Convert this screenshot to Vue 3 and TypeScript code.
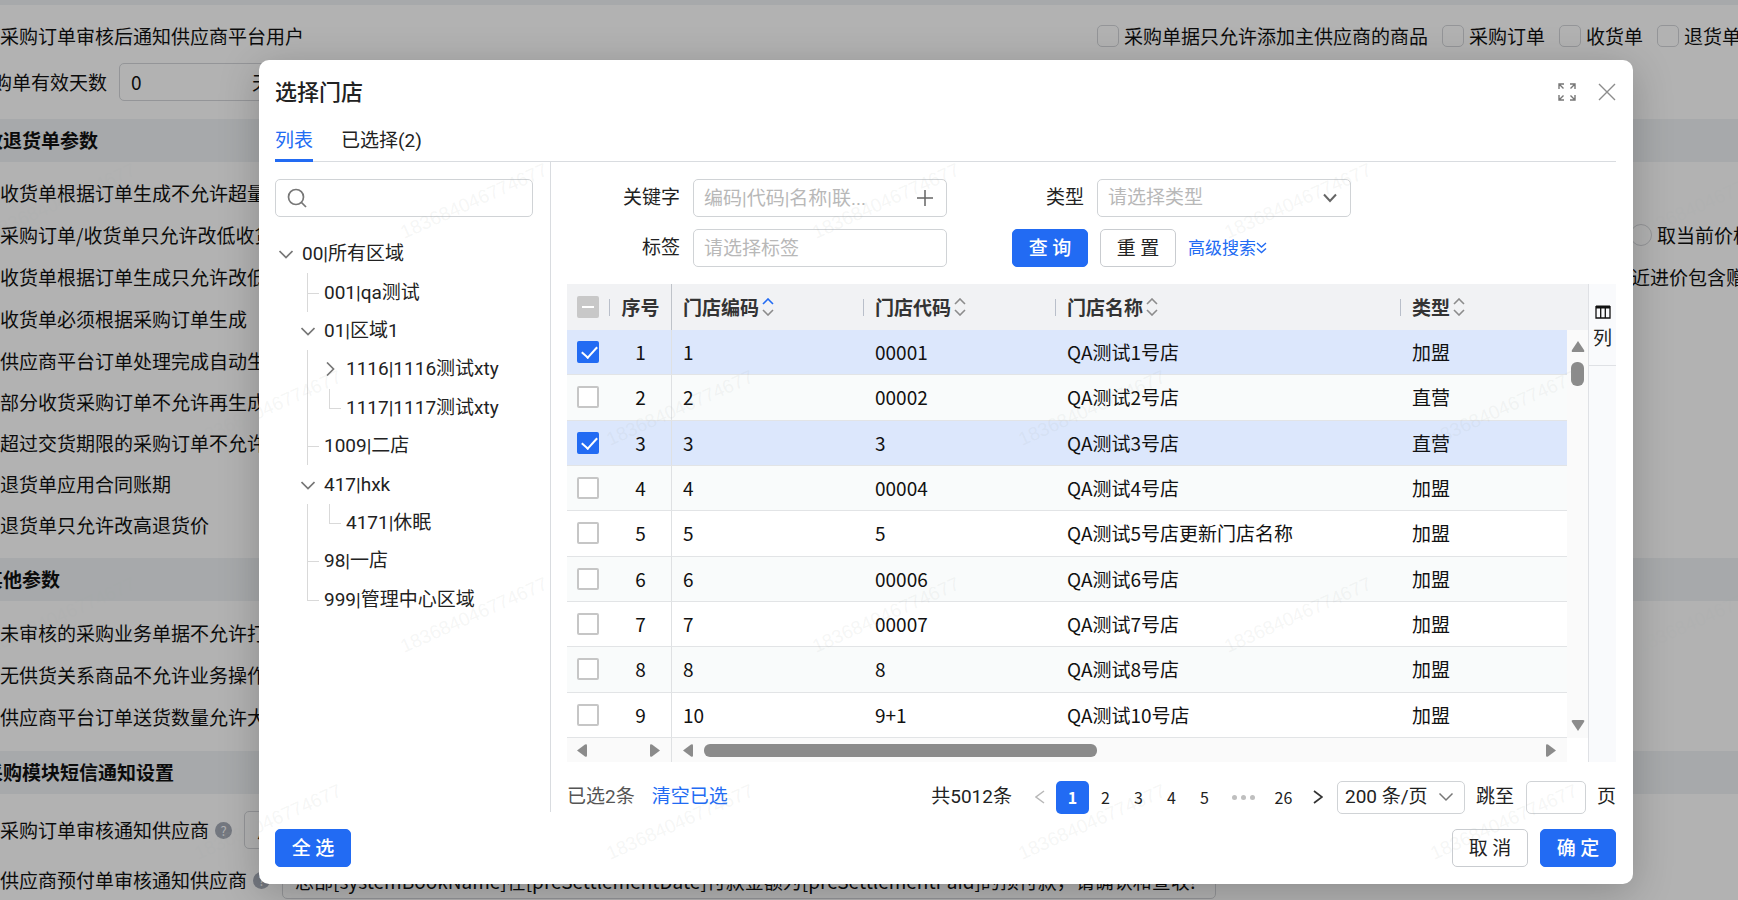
<script setup lang="ts">
import { ref } from 'vue'

interface TreeRow {
  label: string
  level: number
  caret?: 'open' | 'closed'
  guides: string[]
}
interface Store {
  no: number
  code: string
  alias: string
  name: string
  type: string
  checked: boolean
}

const tree: TreeRow[] = [
  { label: '00|所有区域', level: 0, caret: 'open', guides: [] },
  { label: '001|qa测试', level: 1, guides: ['tee'] },
  { label: '01|区域1', level: 1, caret: 'open', guides: [] },
  { label: '1116|1116测试xty', level: 2, caret: 'closed', guides: ['line'] },
  { label: '1117|1117测试xty', level: 2, guides: ['line', 'end'] },
  { label: '1009|二店', level: 1, guides: ['tee'] },
  { label: '417|hxk', level: 1, caret: 'open', guides: [] },
  { label: '4171|休眠', level: 2, guides: ['line', 'end'] },
  { label: '98|一店', level: 1, guides: ['tee'] },
  { label: '999|管理中心区域', level: 1, guides: ['end'] },
]

const stores = ref<Store[]>([
  { no: 1, code: '1', alias: '00001', name: 'QA测试1号店', type: '加盟', checked: true },
  { no: 2, code: '2', alias: '00002', name: 'QA测试2号店', type: '直营', checked: false },
  { no: 3, code: '3', alias: '3', name: 'QA测试3号店', type: '直营', checked: true },
  { no: 4, code: '4', alias: '00004', name: 'QA测试4号店', type: '加盟', checked: false },
  { no: 5, code: '5', alias: '5', name: 'QA测试5号店更新门店名称', type: '加盟', checked: false },
  { no: 6, code: '6', alias: '00006', name: 'QA测试6号店', type: '加盟', checked: false },
  { no: 7, code: '7', alias: '00007', name: 'QA测试7号店', type: '加盟', checked: false },
  { no: 8, code: '8', alias: '8', name: 'QA测试8号店', type: '加盟', checked: false },
  { no: 9, code: '10', alias: '9+1', name: 'QA测试10号店', type: '加盟', checked: false },
])

const columns = [
  { title: '门店编码', sorted: true },
  { title: '门店代码', sorted: false },
  { title: '门店名称', sorted: false },
  { title: '类型', sorted: false },
]

const topOptions = ['采购单据只允许添加主供应商的商品', '采购订单', '收货单', '退货单']
const receiptRules = [
  { text: '收货单根据订单生成不允许超量' },
  { text: '采购订单/收货单只允许改低收货价', radio: '取当前价格' },
  { text: '收货单根据订单生成只允许改低', note: '最近进价包含赠品' },
  { text: '收货单必须根据采购订单生成' },
]
const orderRules = [
  '供应商平台订单处理完成自动生成',
  '部分收货采购订单不允许再生成',
  '超过交货期限的采购订单不允许收货',
  '退货单应用合同账期',
  '退货单只允许改高退货价',
]
const otherRules = ['未审核的采购业务单据不允许打印', '无供货关系商品不允许业务操作', '供应商平台订单送货数量允许大于']
const noticeText = ref('总部[systemBookName]在[preSettlementDate]付款金额为[preSettlementPaid]的预付款，请确认和查收!')
const auditText = ref('总部')
const days = ref('0')
const pages = ['1', '2', '3', '4', '5']

const marks: { x: number; y: number }[] = []
for (let row = 0; row < 4; row++) {
  for (let col = 0; col < 5; col++) {
    marks.push({ x: (row % 2 ? -214 : -8) + col * 412, y: 239 + row * 207 })
  }
}
</script>

<template>
  <div class="screen">
    <main class="page">
      <div class="strip"></div>
      <div class="topline">
        <span>采购订单审核后通知供应商平台用户</span>
        <div class="options">
          <label v-for="o in topOptions" :key="o"><input type="checkbox" class="soft-box" />{{ o }}</label>
        </div>
      </div>
      <div class="days">
        <label for="days">采购单有效天数</label>
        <span class="days-field"><input id="days" v-model="days" type="text" /><span>天</span></span>
      </div>
      <h2>收退货单参数</h2>
      <section class="rules first">
        <div v-for="r in receiptRules" :key="r.text" class="rule tall">
          <span>{{ r.text }}</span>
          <label v-if="r.radio" class="aside"><input type="radio" class="soft-radio" />{{ r.radio }}</label>
          <span v-if="r.note" class="aside note">{{ r.note }}</span>
        </div>
        <div v-for="r in orderRules" :key="r" class="rule">{{ r }}</div>
      </section>
      <h2>其他参数</h2>
      <section class="rules">
        <div v-for="r in otherRules" :key="r" class="rule tall">{{ r }}</div>
      </section>
      <h2>采购模块短信通知设置</h2>
      <section class="notices">
        <div class="notice">
          <label for="audit">采购订单审核通知供应商</label><i class="help">?</i>
          <input id="audit" v-model="auditText" type="text" />
        </div>
        <div class="notice">
          <label for="prepaid">供应商预付单审核通知供应商</label><i class="help">?</i>
          <input id="prepaid" v-model="noticeText" type="text" />
        </div>
      </section>
    </main>

    <div class="mask">
      <div class="modal" role="dialog" aria-labelledby="dialog-title">
        <header class="modal-head">
          <h1 id="dialog-title">选择门店</h1>
          <button class="icon-btn" type="button" aria-label="全屏">
            <svg width="18" height="18" viewBox="0 0 18 18" fill="none" stroke="#777" stroke-width="1.4">
              <path d="M1 6V1h5M1.500 1.500l4 4M12 1h5v5M16.500 1.500l-4 4M1 12v5h5M1.500 16.500l4-4M17 12v5h-5M16.500 16.500l-4-4" />
            </svg>
          </button>
          <button class="icon-btn" type="button" aria-label="关闭">
            <svg width="18" height="18" viewBox="0 0 18 18" fill="none" stroke="#8c8c8c" stroke-width="1.4">
              <path d="M1 1l16 16M17 1L1 17" />
            </svg>
          </button>
        </header>
        <nav class="tabs">
          <button class="tab active" type="button">列表</button>
          <button class="tab" type="button">已选择(2)</button>
        </nav>

        <div class="body">
          <aside class="side">
            <div class="search">
              <svg width="20" height="20" viewBox="0 0 20 20" fill="none" stroke="#777" stroke-width="1.700">
                <circle cx="9" cy="9" r="7.500" />
                <path d="M14.500 14.500L19 19" />
              </svg>
              <input type="text" aria-label="搜索区域" />
            </div>
            <ul class="tree">
              <li v-for="n in tree" :key="n.label">
                <template v-for="i in n.level" :key="i">
                  <span class="guide" :class="n.guides[i - 1]"></span>
                </template>
                <span class="caret">
                  <svg v-if="n.caret" width="14" height="14" viewBox="0 0 14 14" fill="none" stroke="#777" stroke-width="1.700">
                    <path :d="n.caret === 'open' ? 'M.5 4l6.500 6.500L13.500 4' : 'M4 .5l6.500 6.500L4 13.500'" />
                  </svg>
                </span>
                <span class="node">{{ n.label }}</span>
              </li>
            </ul>
          </aside>

          <section class="content">
            <form class="filters" @submit.prevent>
              <label for="kw">关键字</label>
              <div class="field">
                <input id="kw" type="text" placeholder="编码|代码|名称|联..." />
                <svg width="18" height="18" viewBox="0 0 18 18" fill="none" stroke="#666" stroke-width="1.500">
                  <path d="M9 1v16M1 9h16" />
                </svg>
              </div>
              <label for="kind">类型</label>
              <div class="field">
                <select id="kind"><option>请选择类型</option></select>
                <svg width="16" height="16" viewBox="0 0 16 16" fill="none" stroke="#666" stroke-width="2">
                  <path d="M2 4.500l6 6.500 6-6.500" />
                </svg>
              </div>
              <label for="tag">标签</label>
              <div class="field"><input id="tag" type="text" placeholder="请选择标签" /></div>
              <div class="actions">
                <button class="btn primary" type="submit">查 询</button>
                <button class="btn" type="reset">重 置</button>
                <a href="#">高级搜索<svg width="11" height="12" viewBox="0 0 11 12" fill="none" stroke="#226bf3" stroke-width="1.400">
                  <path d="M1 1l4.500 4L10 1M1 6.500l4.500 4 4.500-4" /></svg></a>
              </div>
            </form>

            <div class="grid">
              <div class="grid-main">
                <div class="table-box">
                  <table>
                    <colgroup>
                      <col class="c-check" /><col class="c-no" /><col class="c-code" /><col class="c-code" /><col class="c-name" /><col />
                    </colgroup>
                    <thead>
                      <tr>
                        <th class="check sep"><input type="checkbox" class="box partial" aria-label="全部选择" /></th>
                        <th class="num">序号</th>
                        <th v-for="(c, i) in columns" :key="c.title" :class="{ sep: i < 3 }">
                          <span class="head-cell">{{ c.title }}
                            <svg width="12" height="18" viewBox="0 0 12 18" fill="none" stroke-width="1.600">
                              <path d="M1 6l5-5 5 5" :stroke="c.sorted ? '#226bf3' : '#8c8c8c'" />
                              <path d="M1 12l5 5 5-5" stroke="#8c8c8c" />
                            </svg>
                          </span>
                        </th>
                      </tr>
                    </thead>
                    <tbody>
                      <tr v-for="s in stores" :key="s.no" :class="{ selected: s.checked }">
                        <td class="check"><input v-model="s.checked" type="checkbox" class="box" :aria-label="s.name" /></td>
                        <td class="num">{{ s.no }}</td>
                        <td>{{ s.code }}</td>
                        <td>{{ s.alias }}</td>
                        <td>{{ s.name }}</td>
                        <td>{{ s.type }}</td>
                      </tr>
                    </tbody>
                  </table>
                  <div class="vbar">
                    <svg width="14" height="11" viewBox="0 0 14 11"><path d="M7 0L13 9q1 2-1 2H2Q0 11 1 9z" fill="#8b8b8b" /></svg>
                    <i></i>
                    <svg class="down" width="14" height="11" viewBox="0 0 14 11"><path d="M7 11L13 2q1-2-1-2H2Q0 0 1 2z" fill="#8b8b8b" /></svg>
                  </div>
                </div>
                <div class="hbar">
                  <div class="pinned">
                    <svg width="10" height="13" viewBox="0 0 10 13"><path d="M0 6.500L8 .5q2-1 2 1v10q0 2-2 1z" fill="#8b8b8b" /></svg>
                    <svg width="10" height="13" viewBox="0 0 10 13"><path d="M10 6.500L2 .5Q0-.5 0 1.500v10q0 2 2 1z" fill="#8b8b8b" /></svg>
                  </div>
                  <div class="rest">
                    <svg width="10" height="13" viewBox="0 0 10 13"><path d="M0 6.500L8 .5q2-1 2 1v10q0 2-2 1z" fill="#8b8b8b" /></svg>
                    <i></i>
                    <svg class="right" width="10" height="13" viewBox="0 0 10 13"><path d="M10 6.500L2 .5Q0-.5 0 1.500v10q0 2 2 1z" fill="#8b8b8b" /></svg>
                  </div>
                </div>
              </div>
              <div class="tools">
                <button type="button">
                  <svg width="16" height="14" viewBox="0 0 16 14" fill="none" stroke="#111" stroke-width="1.300">
                    <path d="M1 2h14" stroke-width="3" />
                    <path d="M1 1v12h14V1M5.700 2v11M10.300 2v11" />
                  </svg>
                  列
                </button>
              </div>
            </div>

            <div class="pager">
              <span class="picked">已选2条</span>
              <a href="#">清空已选</a>
              <span class="total">共5012条</span>
              <button type="button" class="step" aria-label="上一页">
                <svg width="10" height="16" viewBox="0 0 10 16" fill="none" stroke="#b8b8b8" stroke-width="1.500"><path d="M9 2L1 8l8 6" /></svg>
              </button>
              <button v-for="p in pages" :key="p" type="button" class="page-no" :class="{ current: p === '1' }">{{ p }}</button>
              <span class="dots"><i></i><i></i><i></i></span>
              <button type="button" class="page-no">26</button>
              <button type="button" class="step next" aria-label="下一页">
                <svg width="10" height="16" viewBox="0 0 10 16" fill="none" stroke="#333" stroke-width="1.700"><path d="M1 2l8 6-8 6" /></svg>
              </button>
              <span class="size">
                <select aria-label="每页条数"><option>200 条/页</option></select>
                <svg width="16" height="16" viewBox="0 0 16 16" fill="none" stroke="#777" stroke-width="1.500"><path d="M1.500 4.500L8 11l6.500-6.500" /></svg>
              </span>
              <label for="jump">跳至</label>
              <input id="jump" type="text" />
              <span>页</span>
            </div>
          </section>
        </div>

        <footer class="modal-foot">
          <button class="btn primary" type="button">全 选</button>
          <span class="grow"></span>
          <button class="btn" type="button">取 消</button>
          <button class="btn primary" type="button">确 定</button>
        </footer>
      </div>
    </div>

    <svg class="watermark" width="100%" height="100%" aria-hidden="true">
      <text v-for="m in marks" :key="m.x + '-' + m.y" :transform="`translate(${m.x} ${m.y}) rotate(-24)`">183684046774677</text>
    </svg>
  </div>
</template>

<style>
body {
  margin: 0;
  overflow: hidden;
}
</style>

<style scoped>
* {
  box-sizing: border-box;
}
.screen {
  position: relative;
  height: 100vh;
  overflow: hidden;
  font-family: Roboto, 'Noto Sans CJK SC', sans-serif;
  font-size: 19px;
  line-height: 28px;
  color: #222;
}
button,
input,
select {
  font: inherit;
  color: inherit;
  margin: 0;
}
button {
  padding: 0;
  border: 0;
  background: none;
}
i {
  font-style: normal;
}
svg {
  flex: none;
  display: block;
}
a {
  color: #226bf3;
  text-decoration: none;
}

/* page behind the dialog */
.page {
  margin-left: -32px;
  font-family: 'Noto Sans CJK SC', sans-serif;
  color: #111;
  white-space: nowrap;
  background: #fff;
}
.strip {
  height: 5px;
  margin-bottom: 9px;
  background: #f0f2f5;
}
.topline {
  display: flex;
  align-items: center;
  justify-content: space-between;
  height: 44px;
  padding-left: 32px;
}
.options {
  display: flex;
  gap: 14px;
  width: 641px;
}
.options label,
.aside {
  display: flex;
  align-items: center;
  gap: 5px;
  flex: none;
}
.soft-box,
.soft-radio {
  appearance: none;
  flex: none;
  width: 22px;
  height: 22px;
  border: 1px solid #d4d6da;
  border-radius: 5px;
  background: #fff;
}
.soft-radio {
  border-radius: 50%;
}
.days {
  display: flex;
  align-items: center;
  gap: 12px;
  height: 48px;
  margin-bottom: 13px;
}
.days label {
  width: 139px;
  display: flex;
  justify-content: flex-end;
}
.days-field {
  display: flex;
  align-items: center;
  width: 170px;
  height: 38px;
  border: 1px solid #d4d6da;
  border-radius: 5px;
}
.days-field input {
  width: 132px;
  border: 0;
  padding: 0 0 0 11px;
  background: none;
}
.page h2 {
  margin: 0;
  padding-left: 16px;
  height: 43px;
  line-height: 41px;
  font-size: 19px;
  font-weight: 700;
  background: #f0f2f5;
}
.rules {
  padding: 11px 0 13px 32px;
}
.rules.first {
  padding-top: 10px;
}
.rule {
  display: flex;
  align-items: center;
  justify-content: space-between;
  height: 41px;
}
.rule.tall {
  height: 42px;
}
.aside {
  width: 108px;
}
.aside.note {
  width: 126px;
}
.notices {
  padding: 11px 0 0 32px;
}
.notice {
  display: flex;
  align-items: center;
  height: 50px;
}
.help {
  width: 17px;
  height: 17px;
  margin: 0 12px 0 6px;
  border-radius: 50%;
  background: #a6adb8;
  color: #fff;
  font-size: 13px;
  line-height: 17px;
  text-align: center;
}
.notice input {
  width: 934px;
  height: 38px;
  padding: 0 12px;
  border: 1px solid #d4d6da;
  border-radius: 5px;
  background: #fff;
}

/* dialog */
.mask {
  position: absolute;
  inset: 0;
  display: flex;
  padding: 60px 105px 16px 259px;
  background: rgba(0, 0, 0, 0.3);
}
.modal {
  flex: 1;
  min-width: 0;
  display: flex;
  flex-direction: column;
  padding: 0 17px 0 16px;
  border-radius: 10px;
  background: #fff;
  box-shadow: 0 8px 40px rgba(0, 0, 0, 0.22);
}
.modal-head {
  display: flex;
  align-items: center;
  gap: 22px;
  height: 64px;
}
.modal-head h1 {
  flex: 1;
  margin: 0;
  padding-top: 2px;
  font-size: 22px;
  font-weight: 500;
}
.tabs {
  display: flex;
  gap: 28px;
  height: 38px;
  border-bottom: 1px solid #d9dce0;
}
.tab {
  height: 38px;
  padding-bottom: 2px;
  border-bottom: 3px solid transparent;
}
.tab.active {
  color: #226bf3;
  border-color: #226bf3;
}
.body {
  display: flex;
  flex: 1;
  min-height: 0;
}
.side {
  flex: none;
  width: 276px;
  padding: 17px 17px 0 0;
  border-right: 1px solid #d9dce0;
}
.search {
  display: flex;
  align-items: center;
  gap: 8px;
  height: 38px;
  padding: 0 11px;
  border: 1px solid #d0d3d6;
  border-radius: 5px;
}
.search input {
  flex: 1;
  min-width: 0;
  border: 0;
  outline: 0;
}
.tree {
  display: flex;
  flex-direction: column;
  height: 384px;
  margin: 18px 0 0;
  padding: 0;
  list-style: none;
}
.tree li {
  display: flex;
  align-items: center;
  flex: 1;
}
.guide {
  position: relative;
  align-self: stretch;
  width: 22px;
}
.caret {
  display: flex;
  justify-content: center;
  width: 22px;
  margin-right: 5px;
}
.guide::before,
.guide::after {
  position: absolute;
  left: 32px;
}
.line::before,
.tee::before,
.end::before {
  content: '';
  top: 0;
  height: 100%;
  border-left: 1px solid #d9d9d9;
}
.end::before {
  height: 50%;
}
.tee::after,
.end::after {
  content: '';
  top: 50%;
  width: 12px;
  border-top: 1px solid #d9d9d9;
}
.content {
  flex: 1;
  min-width: 0;
  padding: 17px 0 0 16px;
}
.filters {
  display: grid;
  grid-template-columns: 113px 254px 124px 254px;
  gap: 12px 13px;
  align-items: center;
  margin-bottom: 17px;
}
.filters > label {
  text-align: right;
}
.field {
  display: grid;
  align-items: center;
}
.field > * {
  grid-area: 1 / 1;
}
.field input,
.field select {
  appearance: none;
  width: 100%;
  height: 38px;
  padding: 0 10px;
  border: 1px solid #d0d3d6;
  border-radius: 5px;
  background: #fff;
  color: #b8b8b8;
}
.field input::placeholder {
  color: #b8b8b8;
}
.field svg {
  justify-self: end;
  margin-right: 13px;
}
.actions {
  grid-column: 3 / -1;
  display: flex;
  align-items: center;
  gap: 12px;
  padding-left: 52px;
}
.actions a {
  display: flex;
  align-items: center;
  font-size: 17px;
}
.btn {
  min-width: 76px;
  height: 38px;
  padding-top: 1px;
  border: 1px solid #c9ccd0;
  border-radius: 5px;
  background: #fff;
  white-space: pre;
}
.btn.primary {
  border-color: #226bf3;
  background: #226bf3;
  color: #fff;
  font-weight: 500;
}

.grid {
  display: flex;
}
.grid-main {
  flex: 1;
  min-width: 0;
}
.table-box {
  position: relative;
}
table {
  width: 100%;
  height: 454px;
  border-spacing: 0;
  table-layout: fixed;
  font-family: 'Noto Sans CJK SC', sans-serif;
  color: #111;
}
.c-check {
  width: 43px;
}
.c-no {
  width: 62px;
}
.c-code {
  width: 192px;
}
.c-name {
  width: 345px;
}
th,
td {
  padding: 0 0 0 11px;
  text-align: left;
  white-space: nowrap;
}
th {
  position: relative;
  height: 46px;
  background: #f1f2f4;
  color: #333;
  font-weight: 700;
}
td {
  height: 45px;
  border-bottom: 1px solid #e2e4e6;
}
tbody tr:nth-child(even) {
  background: #f9fbfb;
}
tbody tr.selected {
  background: #dce7fc;
}
th.check,
td.check {
  padding-left: 10px;
}
td.num,
th.num {
  padding: 0;
  text-align: center;
  border-right: 1px solid #dfe1e3;
}
th.num {
  border-right-color: #bfc3c9;
}
.sep::after {
  content: '';
  position: absolute;
  right: 0;
  top: 15px;
  width: 1px;
  height: 17px;
  background: #b9bfca;
}
.head-cell {
  display: flex;
  align-items: center;
  gap: 3px;
}
.box {
  appearance: none;
  position: relative;
  display: block;
  width: 22px;
  height: 22px;
  border: 2px solid #c6c6c6;
  border-radius: 2px;
  background: #fff;
}
.box:checked {
  border-color: #226bf3;
  background: #226bf3;
}
.box:checked::before {
  content: '';
  position: absolute;
  left: 6px;
  top: 0;
  width: 7px;
  height: 13px;
  border: solid #fff;
  border-width: 0 2px 2px 0;
  transform: rotate(42deg);
}
.box.partial {
  border-color: #c8c8c8;
  background: #c8c8c8;
}
.box.partial::before {
  content: '';
  position: absolute;
  left: 3px;
  top: 8px;
  width: 12px;
  height: 2px;
  background: #fff;
}
.vbar {
  position: absolute;
  top: 46px;
  right: 0;
  bottom: 0;
  display: flex;
  flex-direction: column;
  align-items: center;
  width: 21px;
  padding: 11px 0 7px;
  background: #fafafa;
}
.vbar i {
  width: 13px;
  height: 24px;
  margin-top: 10px;
  border-radius: 6px;
  background: #8b8b8b;
}
.vbar .down {
  margin-top: auto;
}
.hbar {
  display: flex;
  height: 24px;
  margin-right: 21px;
  background: #fafafa;
}
.pinned {
  display: flex;
  align-items: center;
  justify-content: space-between;
  width: 105px;
  padding: 0 11px 0 10px;
  border-right: 1px solid #dfe1e3;
}
.rest {
  display: flex;
  align-items: center;
  flex: 1;
  padding: 0 11px;
}
.rest i {
  width: 45%;
  height: 13px;
  margin-left: 11px;
  border-radius: 6px;
  background: #8b8b8b;
}
.rest .right {
  margin-left: auto;
}
.tools {
  width: 28px;
  border-left: 1px solid #dfe1e5;
  background: #f9fafc;
}
.tools button {
  display: flex;
  flex-direction: column;
  align-items: center;
  gap: 6px;
  width: 100%;
  height: 82px;
  padding-top: 21px;
  border-bottom: 1px solid #dfe1e5;
}

.pager {
  display: flex;
  align-items: center;
  height: 32px;
  margin-top: 19px;
  white-space: nowrap;
}
.picked {
  margin-right: 17px;
  color: #555;
}
.total {
  margin-left: auto;
}
.step {
  display: flex;
  justify-content: center;
  width: 32px;
  margin-left: 12px;
}
.step.next {
  margin: 0 3px 0 2px;
}
.page-no {
  width: 33px;
  height: 33px;
  border-radius: 5px;
  font-family: 'Noto Sans CJK SC', sans-serif;
  font-size: 16px;
}
.page-no.current {
  background: #226bf3;
  color: #fff;
  font-weight: 700;
}
.dots {
  display: flex;
  justify-content: center;
  gap: 4px;
  width: 46px;
}
.dots i {
  width: 5px;
  height: 5px;
  border-radius: 50%;
  background: #bfbfbf;
}
.size {
  display: grid;
  align-items: center;
  width: 128px;
  margin-right: 11px;
}
.size > * {
  grid-area: 1 / 1;
}
.size svg {
  justify-self: end;
  margin-right: 11px;
}
.size select {
  appearance: none;
  height: 33px;
  padding: 0 7px;
  border: 1px solid #d0d3d6;
  border-radius: 5px;
  background: #fff;
}
#jump {
  width: 60px;
  height: 33px;
  margin: 0 11px 0 12px;
  border: 1px solid #d0d3d6;
  border-radius: 5px;
}

.modal-foot {
  display: flex;
  gap: 12px;
  padding: 17px 0;
}
.grow {
  flex: 1;
}
.watermark {
  position: absolute;
  inset: 0;
  pointer-events: none;
}
.watermark text {
  font-family: 'Liberation Sans', sans-serif;
  font-size: 19px;
  fill: rgba(165, 172, 168, 0.11);
}
</style>
